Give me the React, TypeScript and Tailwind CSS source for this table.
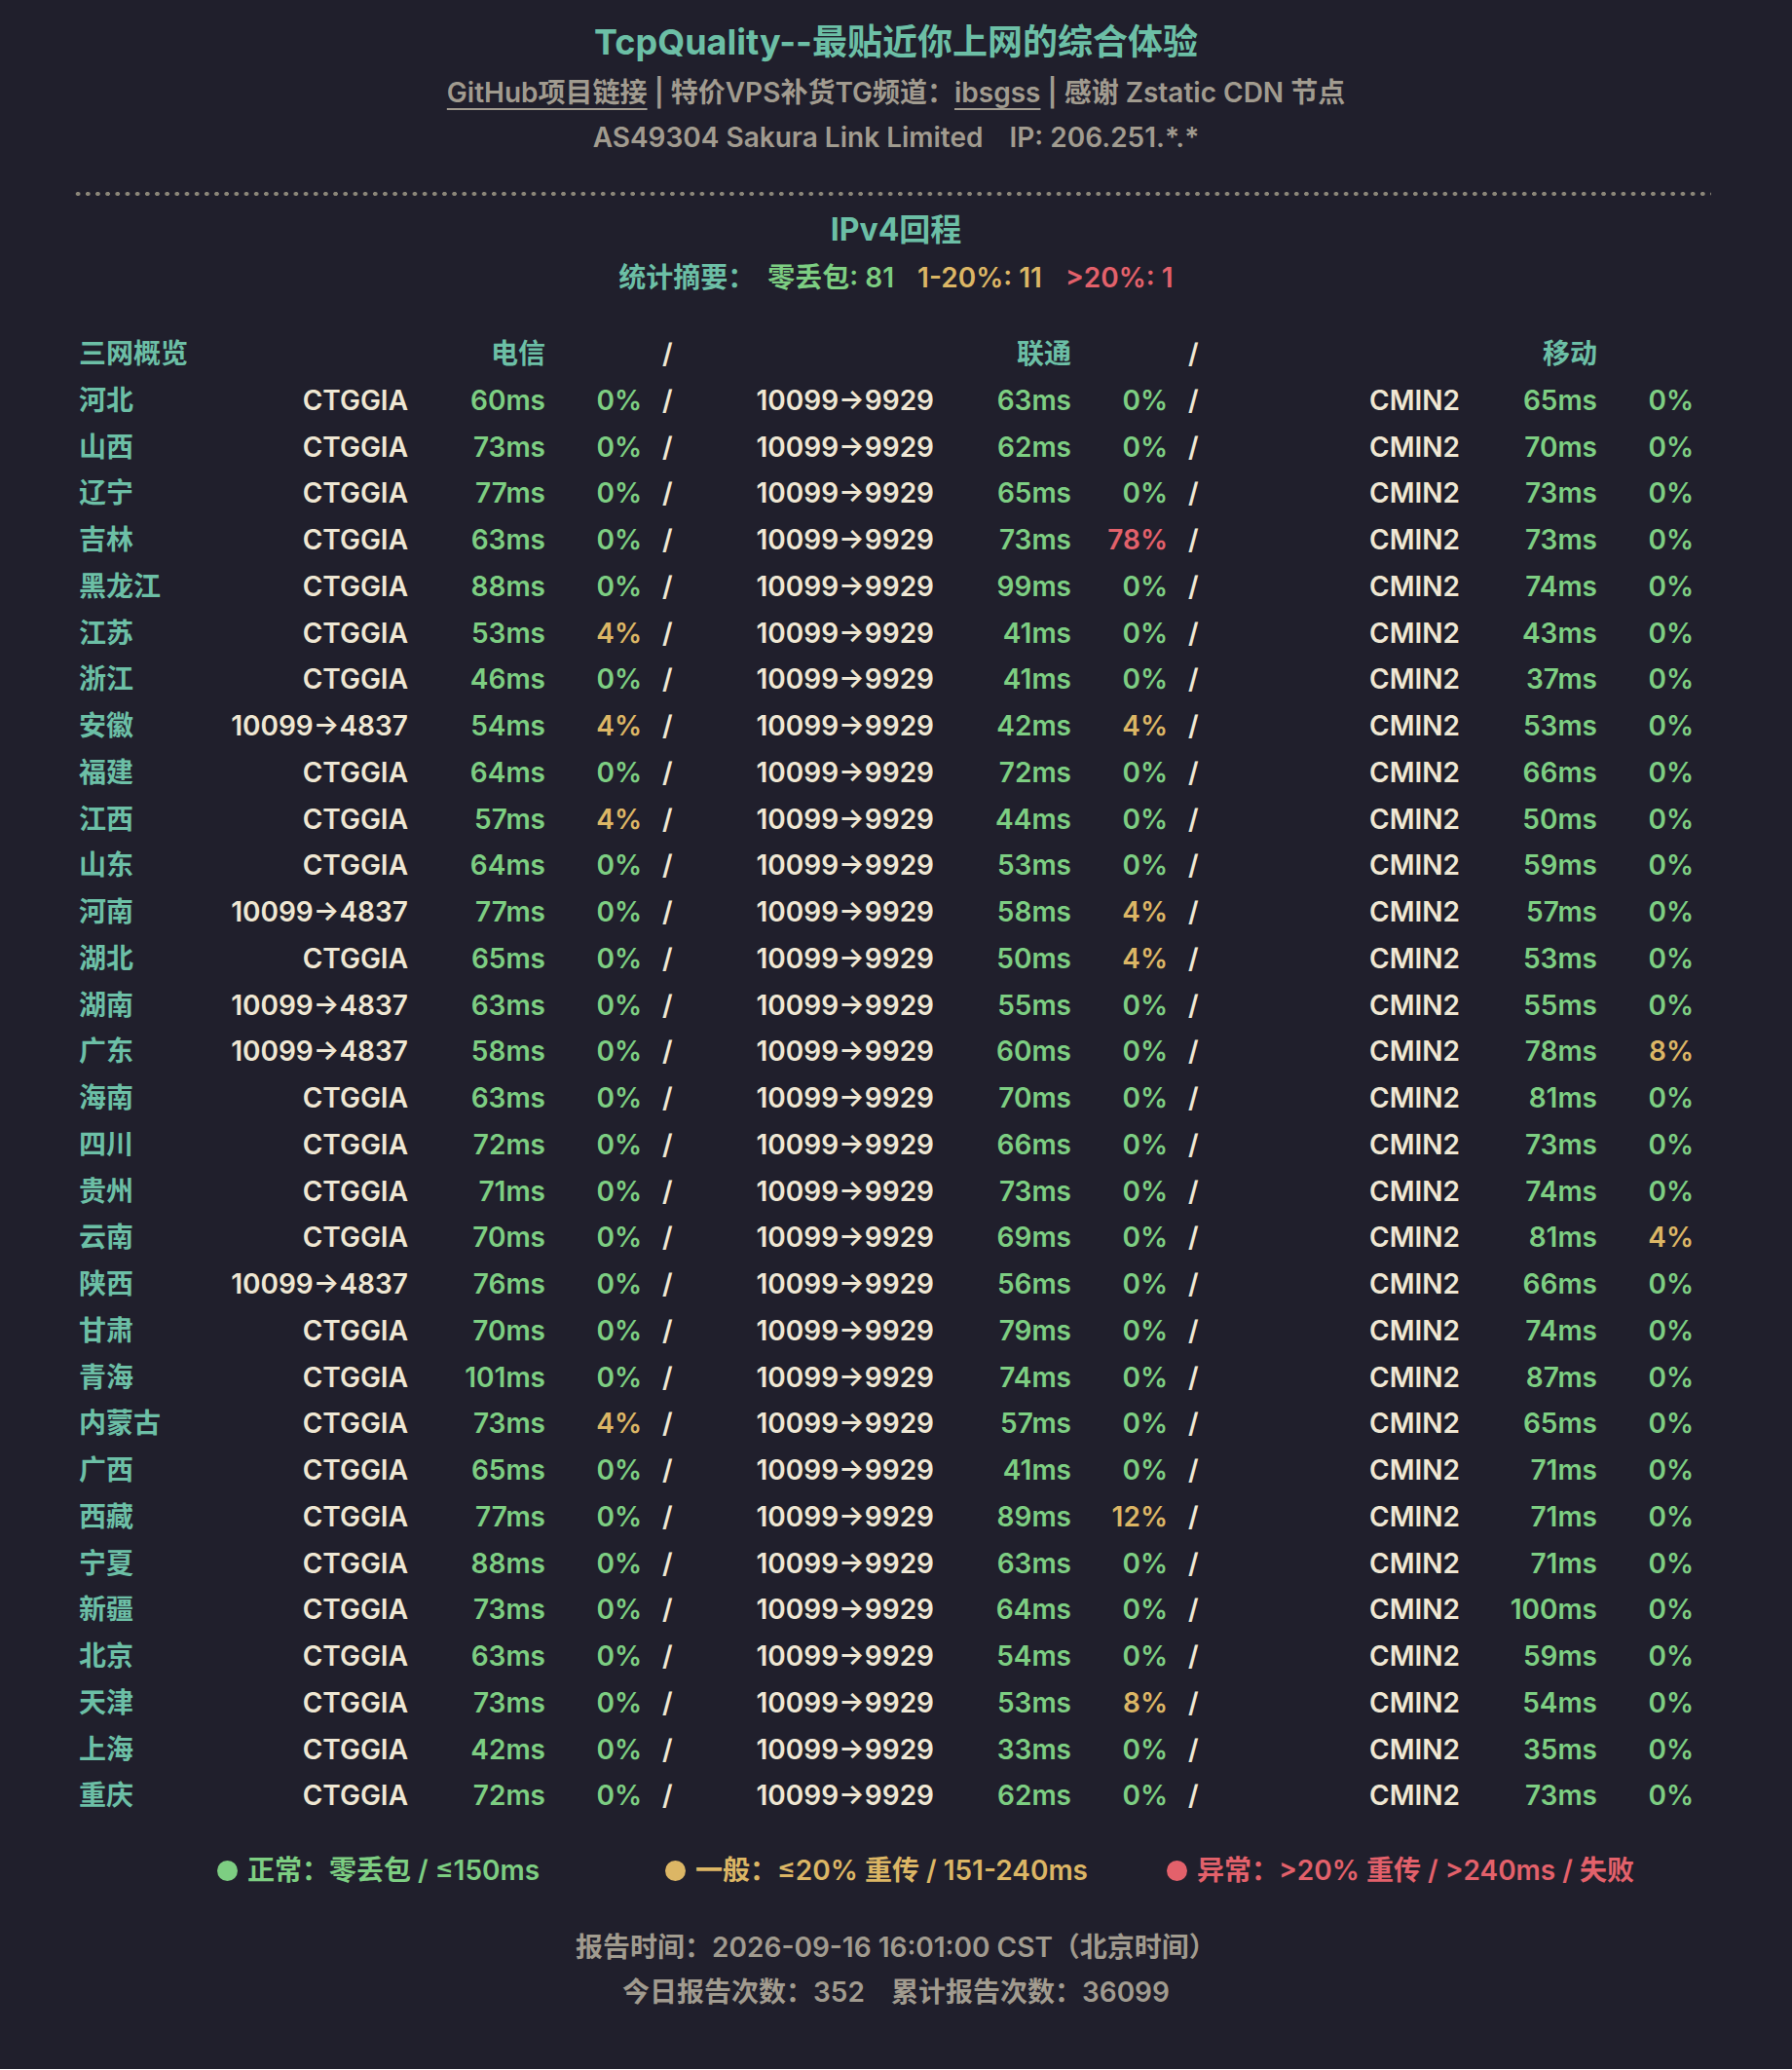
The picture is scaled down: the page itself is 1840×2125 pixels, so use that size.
import React from "react";

// province, telecom route, ct ms, ct loss, cu ms, cu loss, cm ms, cm loss
const rows: [string, string, number, number, number, number, number, number][] = [
  ["河北", "CTGGIA", 60, 0, 63, 0, 65, 0],
  ["山西", "CTGGIA", 73, 0, 62, 0, 70, 0],
  ["辽宁", "CTGGIA", 77, 0, 65, 0, 73, 0],
  ["吉林", "CTGGIA", 63, 0, 73, 78, 73, 0],
  ["黑龙江", "CTGGIA", 88, 0, 99, 0, 74, 0],
  ["江苏", "CTGGIA", 53, 4, 41, 0, 43, 0],
  ["浙江", "CTGGIA", 46, 0, 41, 0, 37, 0],
  ["安徽", "10099→4837", 54, 4, 42, 4, 53, 0],
  ["福建", "CTGGIA", 64, 0, 72, 0, 66, 0],
  ["江西", "CTGGIA", 57, 4, 44, 0, 50, 0],
  ["山东", "CTGGIA", 64, 0, 53, 0, 59, 0],
  ["河南", "10099→4837", 77, 0, 58, 4, 57, 0],
  ["湖北", "CTGGIA", 65, 0, 50, 4, 53, 0],
  ["湖南", "10099→4837", 63, 0, 55, 0, 55, 0],
  ["广东", "10099→4837", 58, 0, 60, 0, 78, 8],
  ["海南", "CTGGIA", 63, 0, 70, 0, 81, 0],
  ["四川", "CTGGIA", 72, 0, 66, 0, 73, 0],
  ["贵州", "CTGGIA", 71, 0, 73, 0, 74, 0],
  ["云南", "CTGGIA", 70, 0, 69, 0, 81, 4],
  ["陕西", "10099→4837", 76, 0, 56, 0, 66, 0],
  ["甘肃", "CTGGIA", 70, 0, 79, 0, 74, 0],
  ["青海", "CTGGIA", 101, 0, 74, 0, 87, 0],
  ["内蒙古", "CTGGIA", 73, 4, 57, 0, 65, 0],
  ["广西", "CTGGIA", 65, 0, 41, 0, 71, 0],
  ["西藏", "CTGGIA", 77, 0, 89, 12, 71, 0],
  ["宁夏", "CTGGIA", 88, 0, 63, 0, 71, 0],
  ["新疆", "CTGGIA", 73, 0, 64, 0, 100, 0],
  ["北京", "CTGGIA", 63, 0, 54, 0, 59, 0],
  ["天津", "CTGGIA", 73, 0, 53, 8, 54, 0],
  ["上海", "CTGGIA", 42, 0, 33, 0, 35, 0],
  ["重庆", "CTGGIA", 72, 0, 62, 0, 73, 0],
];

const grid =
  "grid grid-cols-[119px_219px_141px_99px_41px_259px_141px_99px_41px_259px_141px_99px] h-[47.75px] leading-[47.75px]";

const msColor = (v: number) =>
  v <= 150 ? "text-[#7dce82]" : v <= 240 ? "text-[#dcb665]" : "text-[#e3616b]";

const lossColor = (v: number) =>
  v === 0 ? "text-[#7dce82]" : v <= 20 ? "text-[#dcb665]" : "text-[#e3616b]";

const Slash = () => <span className="pl-[21px] text-[#efe7d3]">/</span>;

const Carrier = ({ route, ms, loss }: { route: string; ms: number; loss: number }) => (
  <>
    <span className="text-right text-[#efe7d3]">{route}</span>
    <span className={`text-right ${msColor(ms)}`}>{ms}ms</span>
    <span className={`text-right ${lossColor(loss)}`}>{loss}%</span>
  </>
);

export default function App() {
  return (
    <div className="min-h-[2124px] bg-[#201f2c] pt-[18px] pb-[55px] font-['Inter','Noto_Sans_CJK_SC',sans-serif] font-semibold text-[28px] text-[#a19b8f]">
      {/* Header */}
      <div className="flex flex-col items-center">
        <h1 className="text-[36px] leading-[50px] font-bold text-[#6cbfa6]">TcpQuality--最贴近你上网的综合体验</h1>
        <div className="mt-1 leading-[46px]">
          <a className="underline decoration-2 underline-offset-[6px]">GitHub项目链接</a>
          {" | "}特价VPS补货TG频道：
          <a className="underline decoration-2 underline-offset-[6px]">ibsgss</a>
          {" | "}感谢 Zstatic CDN 节点
        </div>
        <div className="flex gap-[27px] leading-[46px]">
          <span>AS49304 Sakura Link Limited</span>
          <span>IP: 206.251.*.*</span>
        </div>
      </div>

      <div className="ml-[75px] mr-[83px] mt-[33px] h-[4px] bg-[radial-gradient(circle,#8b8679_2px,transparent_2.5px)] bg-[length:10.18px_4px]" />

      {/* IPv4 section */}
      <div className="mt-[13px] flex flex-col items-center">
        <h2 className="text-[32px] leading-[44px] font-bold text-[#6cbfa6]">IPv4回程</h2>
        <div className="mt-1 flex gap-[24px] leading-[46px]">
          <span className="-mr-[11px] text-[#6cbfa6]">统计摘要：</span>
          <span className="text-[#7dce82]">零丢包: 81</span>
          <span className="text-[#dcb665]">1-20%: 11</span>
          <span className="text-[#e3616b]">&gt;20%: 1</span>
        </div>
      </div>

      <div className="ml-[81px] mt-[32px]">
        <div className={`${grid} text-[#6cbfa6]`}>
          <span className="col-span-2">三网概览</span>
          <span className="text-right">电信</span>
          <span />
          <Slash />
          <span />
          <span className="text-right">联通</span>
          <span />
          <Slash />
          <span />
          <span className="text-right">移动</span>
          <span />
        </div>
        {rows.map(([p, r, cm1, cl1, um, ul, mm, ml]) => (
          <div key={p} className={grid}>
            <span className="text-[#6cbfa6]">{p}</span>
            <Carrier route={r} ms={cm1} loss={cl1} />
            <Slash />
            <Carrier route="10099→9929" ms={um} loss={ul} />
            <Slash />
            <Carrier route="CMIN2" ms={mm} loss={ml} />
          </div>
        ))}
      </div>

      {/* Legend */}
      <div className="ml-[223px] mt-[29px] grid grid-cols-[460px_515px_auto] leading-[46px]">
        <div className="flex items-center gap-[10px] text-[#7dce82]">
          <span className="h-[21px] w-[21px] rounded-full bg-[#7dce82]" />
          正常：零丢包 / ≤150ms
        </div>
        <div className="flex items-center gap-[10px] text-[#dcb665]">
          <span className="h-[21px] w-[21px] rounded-full bg-[#dcb665]" />
          一般：≤20% 重传 / 151-240ms
        </div>
        <div className="flex items-center gap-[10px] text-[#e3616b]">
          <span className="h-[21px] w-[21px] rounded-full bg-[#e3616b]" />
          异常：&gt;20% 重传 / &gt;240ms / 失败
        </div>
      </div>

      {/* Footer */}
      <div className="mt-[33px] flex flex-col items-center leading-[46px]">
        <div>报告时间：2026-09-16 16:01:00 CST（北京时间）</div>
        <div className="flex gap-[27px]">
          <span>今日报告次数：352</span>
          <span>累计报告次数：36099</span>
        </div>
      </div>
    </div>
  );
}
